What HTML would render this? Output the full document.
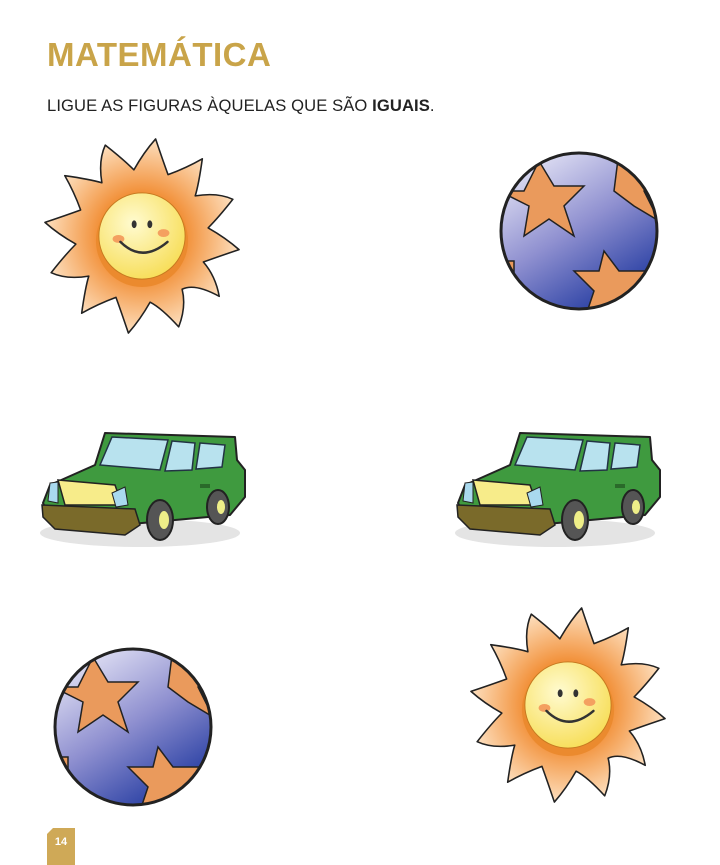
<!DOCTYPE html>
<html><head><meta charset="utf-8"><style>
body{margin:0;width:720px;height:865px;background:#fff;position:relative;overflow:hidden;font-family:"Liberation Sans",sans-serif}
h1{position:absolute;left:47px;top:36px;margin:0;font-size:33px;font-weight:bold;color:#c9a449;letter-spacing:0.5px}
p{position:absolute;left:47px;top:96px;margin:0;font-size:16.6px;color:#222;letter-spacing:0.1px}
svg{position:absolute;left:0;top:0}
.pg{position:absolute;left:47px;top:828px;width:28px;height:37px;background:#cfa957;clip-path:polygon(6px 0,100% 0,100% 100%,0 100%,0 6px);color:#fff;font-size:11px;font-weight:bold;text-align:center;line-height:28px}
</style></head><body>
<h1>MATEMÁTICA</h1>
<p>LIGUE AS FIGURAS ÀQUELAS QUE SÃO <b>IGUAIS</b>.</p>
<svg width="720" height="865" viewBox="0 0 720 865">
<defs>
<radialGradient id="sg" cx="0.5" cy="0.5" r="0.5"><stop offset="0.45" stop-color="#f2913a"/><stop offset="1" stop-color="#fde0c0"/></radialGradient>
<radialGradient id="fg" cx="0.4" cy="0.35" r="0.7"><stop offset="0" stop-color="#fffbd0"/><stop offset="1" stop-color="#f7dd55"/></radialGradient>
<linearGradient id="bg" x1="0.2" y1="0.1" x2="0.7" y2="0.9"><stop offset="0" stop-color="#d8d8f0"/><stop offset="0.5" stop-color="#8f90d0"/><stop offset="1" stop-color="#3448a8"/></linearGradient>
<g id="sun">
<path transform="rotate(8)" fill="url(#sg)" stroke="#222" stroke-width="1.6" stroke-linejoin="round" d="M65.7,17.6 Q80,30 86.6,50 Q60,40 48.1,48.1 Q55,65 50,86.6 Q30,70 17.6,65.7 Q10,85 0,100 Q-10,80 -17.6,65.7 Q-35,75 -50,86.6 Q-50,60 -48.1,48.1 Q-70,55 -86.6,50 Q-75,30 -65.7,17.6 Q-85,10 -100,0 Q-80,-10 -65.7,-17.6 Q-75,-35 -86.6,-50 Q-60,-50 -48.1,-48.1 Q-55,-70 -50,-86.6 Q-30,-75 -17.6,-65.7 Q-10,-85 0,-100 Q10,-80 17.6,-65.7 Q35,-75 50,-86.6 Q50,-60 48.1,-48.1 Q70,-55 86.6,-50 Q75,-30 65.7,-17.6 Q85,-10 100,0 Q80,10 65.7,17.6Z"/>
<circle r="47" fill="#eb8a2e" cy="5"/>
<circle r="44" fill="url(#fg)" stroke="#c77a20" stroke-width="1"/>
<ellipse cx="-8" cy="-12" rx="2.5" ry="4" fill="#333"/><ellipse cx="8" cy="-12" rx="2.5" ry="4" fill="#333"/>
<ellipse cx="-24" cy="3" rx="6" ry="4" fill="#f4a060"/><ellipse cx="22" cy="-3" rx="6" ry="4" fill="#f4a060"/>
<path d="M-22,6 Q0,28 26,6" fill="none" stroke="#333" stroke-width="2.5" stroke-linecap="round"/>
</g>
<clipPath id="bc"><circle r="78"/></clipPath>
<g id="ball">
<circle r="78" fill="url(#bg)"/>
<g clip-path="url(#bc)" fill="#ea9a5c" stroke="#222" stroke-width="1.5">
<polygon points="-80,-40 -55,-40 -40,-70 -25,-45 5,-45 -15,-25 -5,5 -30,-12 -55,5 -50,-25"/>
<polygon points="40,-80 55,-60 80,-60 65,-40 80,-10 55,-25 35,-40"/>
<polygon points="25,20 40,40 70,40 50,60 60,90 30,75 5,90 15,60 -5,40 20,40"/>
<polygon points="-80,30 -65,30 -65,50 -80,60"/>
</g>
<circle r="78" fill="none" stroke="#222" stroke-width="3"/>
</g>
<g id="car">
<ellipse cx="100" cy="108" rx="100" ry="14" fill="#e4e4e4"/>
<path d="M55,40 L65,8 L195,12 L197,35 L205,45 L205,72 L190,90 L80,100 L10,92 L3,78 L10,60 Z" fill="#3f9a3f" stroke="#222" stroke-width="2" stroke-linejoin="round"/>
<path d="M60,40 L72,12 L128,15 L120,45 Z" fill="#b8e2ee" stroke="#234" stroke-width="1.5"/>
<path d="M132,16 L155,18 L152,45 L125,46 Z" fill="#b8e2ee" stroke="#234" stroke-width="1.5"/>
<path d="M160,18 L185,20 L182,42 L156,44 Z" fill="#b8e2ee" stroke="#234" stroke-width="1.5"/>
<path d="M18,55 L75,60 L82,80 L25,80 Z" fill="#f7ec8a" stroke="#222" stroke-width="1.5"/>
<path d="M72,68 L85,62 L88,80 L76,82 Z" fill="#a9d9ee" stroke="#222" stroke-width="1"/>
<path d="M10,58 L18,57 L18,78 L8,76 Z" fill="#a9d9ee" stroke="#222" stroke-width="1"/>
<path d="M2,80 L95,84 L100,100 L85,110 L15,104 L3,92 Z" fill="#7a6a2a" stroke="#222" stroke-width="1.5"/>
<ellipse cx="120" cy="95" rx="13" ry="20" fill="#555" stroke="#222" stroke-width="2"/>
<ellipse cx="124" cy="95" rx="5" ry="9" fill="#ee8"/>
<ellipse cx="178" cy="82" rx="11" ry="17" fill="#555" stroke="#222" stroke-width="2"/>
<ellipse cx="181" cy="82" rx="4" ry="7" fill="#ee8"/>
<rect x="160" y="59" width="10" height="4" fill="#2a6a2a"/>
</g>
</defs>
<use href="#sun" transform="translate(142,236) scale(0.98)"/>
<use href="#ball" transform="translate(579,231)"/>
<use href="#car" transform="translate(40,425)"/>
<use href="#car" transform="translate(455,425)"/>
<use href="#ball" transform="translate(133,727)"/>
<use href="#sun" transform="translate(568,705) scale(0.98)"/>
</svg>
<div class="pg">14</div>
</body></html>
